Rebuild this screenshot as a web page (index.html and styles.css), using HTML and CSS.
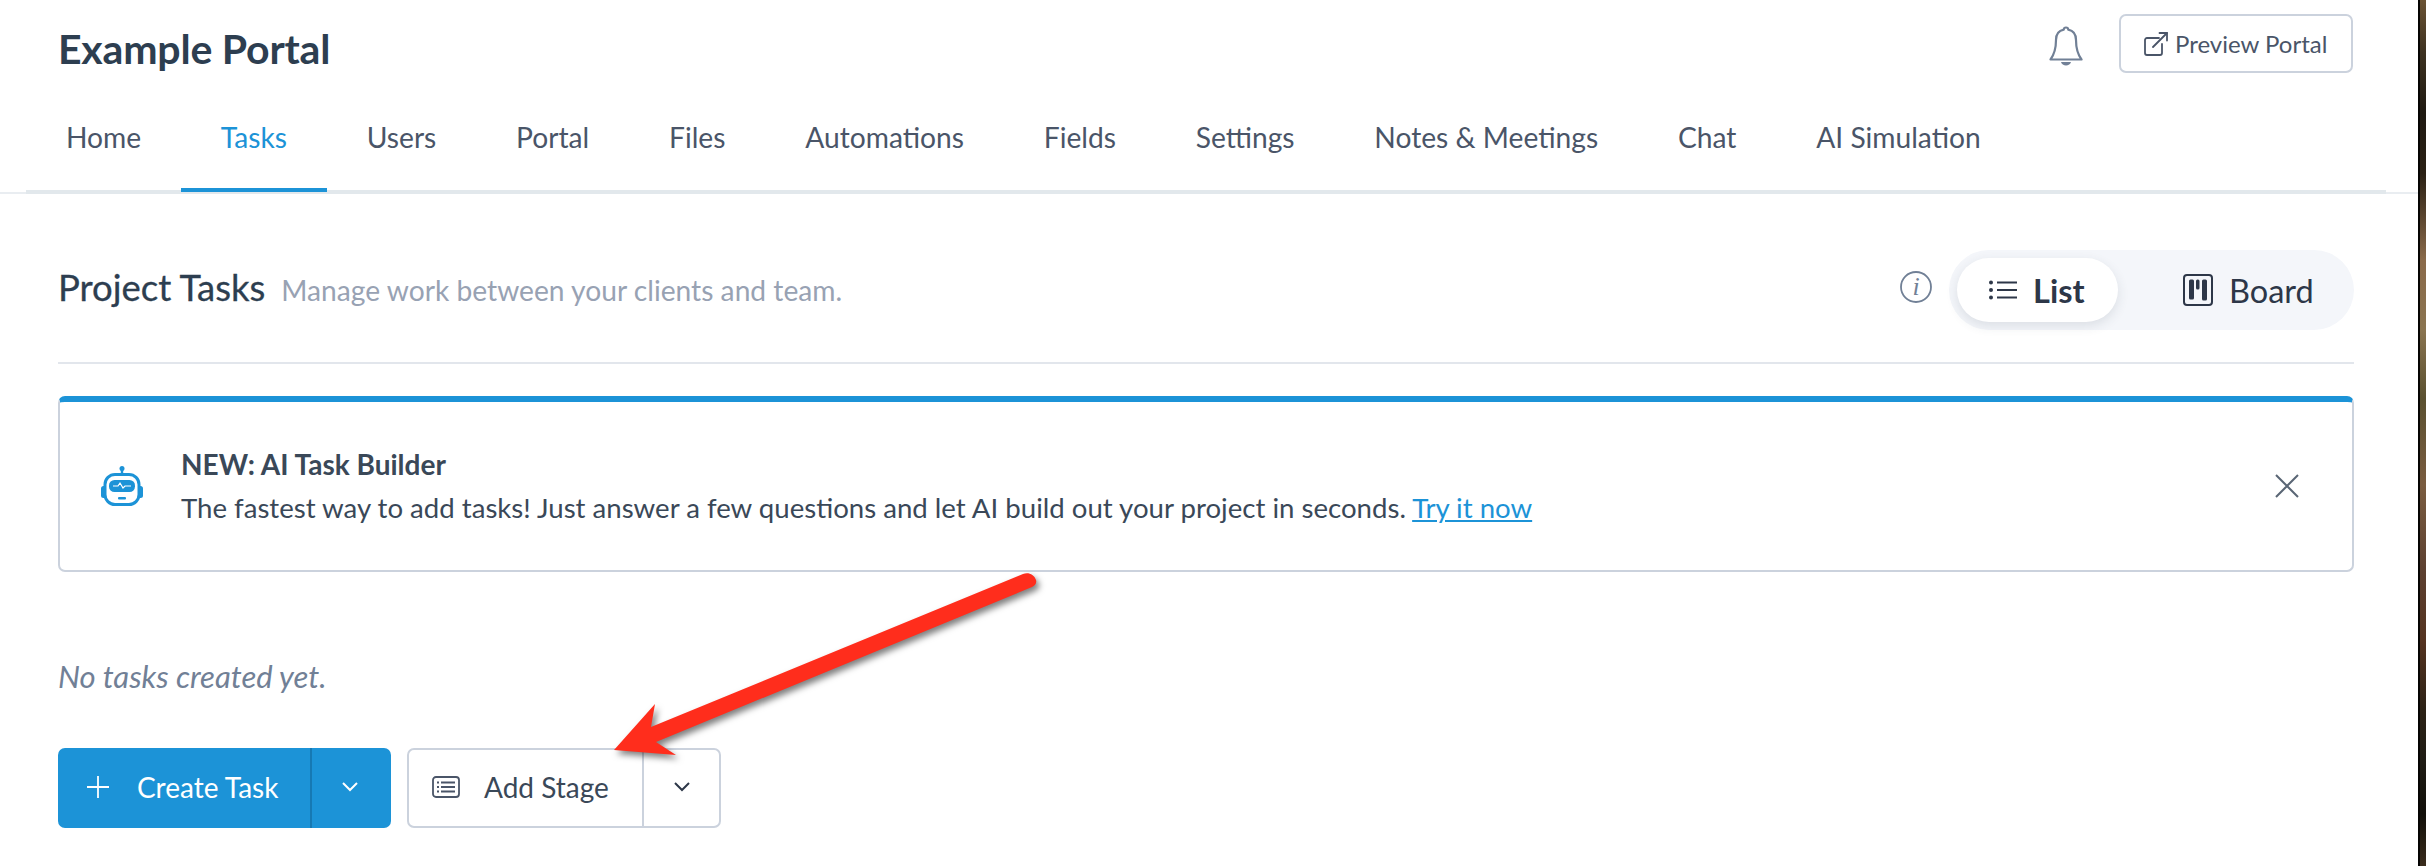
FILE: index.html
```html
<!DOCTYPE html>
<html lang="en">
<head>
<meta charset="utf-8">
<title>Example Portal</title>
<link rel="stylesheet" href="styles.css">
</head>
<body>
<div class="app">
  <main class="main">
    <header class="header">
      <div class="top-row">
        <h1 class="portal-title">Example Portal</h1>
        <div class="top-actions">
          <svg class="bell" viewBox="0 0 34 40" fill="none" stroke="#718096" stroke-width="2.2" stroke-linejoin="round"><path d="M17 1.500c1.300 0 2.200 1 2.300 2.200 5.200 1.100 7.700 5.300 7.700 10.300 0 8 1.500 14 5.500 19.500H1.500C5.500 28 7 22 7 14c0-5 2.500-9.200 7.700-10.300.1-1.200 1-2.200 2.300-2.200z"/><path d="M12 36h10c-.5 2.200-2.700 3.500-5 3.500s-4.500-1.300-5-3.500z" fill="#718096" stroke="none"/></svg>
          <button class="preview-btn">
            <svg class="ext-icon" viewBox="0 0 24 24" fill="none" stroke="#4a5568" stroke-width="1.800" stroke-linecap="round" stroke-linejoin="round"><path d="M15 6H3a2 2 0 0 0-2 2v13a2 2 0 0 0 2 2h13a2 2 0 0 0 2-2v-9"/><path d="M9 15 23 1"/><path d="M15.500 1H23v7.500"/></svg>
            <span>Preview Portal</span>
          </button>
        </div>
      </div>
      <nav class="tabs">
        <a class="tab">Home</a>
        <a class="tab tab-active">Tasks</a>
        <a class="tab">Users</a>
        <a class="tab">Portal</a>
        <a class="tab">Files</a>
        <a class="tab">Automations</a>
        <a class="tab">Fields</a>
        <a class="tab">Settings</a>
        <a class="tab">Notes &amp; Meetings</a>
        <a class="tab">Chat</a>
        <a class="tab">AI Simulation</a>
      </nav>
    </header>

    <section class="content">
      <div class="section-head">
        <div class="section-title">
          <h2>Project Tasks</h2>
          <span class="section-sub">Manage work between your clients and team.</span>
        </div>
        <div class="section-tools">
          <svg class="info-icon" viewBox="0 0 32 32" fill="none"><circle cx="16" cy="16" r="15" stroke="#718096" stroke-width="1.800"/><text x="16" y="24" text-anchor="middle" class="info-i">i</text></svg>
          <div class="view-toggle">
            <div class="view-opt view-on">
              <svg class="list-icon" viewBox="0 0 28 20" fill="#2d3748"><circle cx="2" cy="2.500" r="2"/><circle cx="2" cy="10" r="2"/><circle cx="2" cy="17.500" r="2"/><rect x="8" y="1.500" width="20" height="2"/><rect x="8" y="9" width="20" height="2"/><rect x="8" y="16.500" width="20" height="2"/></svg>
              <span>List</span>
            </div>
            <div class="view-opt">
              <svg class="board-icon" viewBox="0 0 30 32" fill="none"><rect x="1" y="1" width="28" height="30" rx="3" stroke="#2d3748" stroke-width="2"/><rect x="6" y="5.500" width="5" height="20" rx="1.500" fill="#2d3748"/><rect x="13" y="5.500" width="3.500" height="10" rx="1.500" fill="#2d3748"/><rect x="19" y="5.500" width="5" height="21" rx="1.500" fill="#2d3748"/></svg>
              <span>Board</span>
            </div>
          </div>
        </div>
      </div>

      <div class="notice">
        <svg class="robot" viewBox="0 0 42 40" fill="none">
          <circle cx="21" cy="2.500" r="2.500" fill="#1c93d7"/>
          <rect x="19.800" y="3" width="2.400" height="6" fill="#1c93d7"/>
          <rect x="0" y="20" width="6" height="12" rx="2.500" fill="#1c93d7"/>
          <rect x="36" y="20" width="6" height="12" rx="2.500" fill="#1c93d7"/>
          <rect x="4" y="8.500" width="34" height="30" rx="10" fill="#fff" stroke="#1c93d7" stroke-width="3"/>
          <rect x="8" y="14" width="26" height="12" rx="5.500" fill="#1c93d7"/>
          <path d="M12 20h5l2-3 3 5 2-2h6" stroke="#fff" stroke-width="1.200"/>
          <rect x="17" y="31" width="8" height="2.500" rx="1" fill="#1c93d7"/>
        </svg>
        <div class="notice-text">
          <strong>NEW: AI Task Builder</strong>
          <p>The fastest way to add tasks! Just answer a few questions and let AI build out your project in seconds. <a class="link">Try it now</a></p>
        </div>
        <svg class="close-icon" viewBox="0 0 24 24" fill="none" stroke="#5a6675" stroke-width="2"><path d="M1 1l22 22M23 1 1 23"/></svg>
      </div>

      <p class="empty">No tasks created yet.</p>

      <div class="actions">
        <div class="split split-primary">
          <button class="split-main">
            <svg class="plus" viewBox="0 0 22 22" stroke="#fff" stroke-width="1.800"><path d="M11 0v22M0 11h22"/></svg>
            <span>Create Task</span>
          </button>
          <button class="split-caret">
            <svg class="caret" viewBox="0 0 16 10" fill="none" stroke="#fff" stroke-width="2"><path d="M1 1l7 7 7-7"/></svg>
          </button>
        </div>
        <div class="split split-plain">
          <button class="split-main">
            <svg class="stage-icon" viewBox="0 0 28 22" fill="none" stroke="#4a5568" stroke-width="1.800"><rect x="1" y="1" width="26" height="20" rx="3"/><path d="M9 6.500h14M9 11h14M9 15.500h14M5 6.500h2M5 11h2M5 15.500h2"/></svg>
            <span>Add Stage</span>
          </button>
          <button class="split-caret">
            <svg class="caret" viewBox="0 0 16 10" fill="none" stroke="#2d3748" stroke-width="2"><path d="M1 1l7 7 7-7"/></svg>
          </button>
        </div>
      </div>
    </section>

    <svg class="arrow" viewBox="0 0 430 190" width="430" height="190">
      <path fill="#ff2d1c" d="M0 181 41 135 37 158 409 5C414 3 420 5 422 11 423 14 421 17 418 18L42 173 62 186z"/>
    </svg>
  </main>
  <aside class="photo-strip"></aside>
</div>
</body>
</html>
```
FILE: styles.css
```css
* { box-sizing: border-box; }
html, body { margin: 0; height: 866px; overflow: hidden; background: #fff; }
body { font-family: Lato, "Liberation Sans", sans-serif; color: #2d3748; }
.app { display: flex; width: 2426px; height: 866px; }
.main { position: relative; width: 2418px; flex: none; background: #fff; }
.photo-strip { width: 8px; flex: none; border-left: 2px solid #050403;
  background: linear-gradient(to bottom, #6a5233 0, #3e3221 6%, #1f1a12 13%, #2a2014 20%, #8a6a4a 30%, #8a7450 38%, #5a5030 46%, #7a5c40 56%, #5c4030 66%, #553320 74%, #2c2216 82%, #1f1c14 88%, #12100a 94%, #3a2c1c 100%); }

.header { border-bottom: 2px solid #e9edf1; }
.top-row { display: flex; justify-content: space-between; align-items: center; padding: 14px 65px 0 58px; height: 73px; }
.portal-title { margin: 10px 0 0; font-size: 41px; line-height: 50px; font-weight: 700; color: #2d3e50; letter-spacing: -0.2px; }
.top-actions { display: flex; align-items: center; gap: 36px; }
.bell { width: 34px; height: 40px; margin-top: 4px; }
.preview-btn { display: flex; align-items: center; gap: 7px; width: 234px; height: 59px; padding: 0 0 0 23px; background: #fff; border: 2px solid #cbd2dd; border-radius: 7px; font: 400 24px Lato, sans-serif; color: #4a5568; }
.ext-icon { width: 24px; height: 24px; }

.tabs { display: flex; width: 2360px; margin-left: 26px; height: 121px; border-bottom: 4px solid #e2e8ec; margin-bottom: -2px; }
.tab { display: block; padding: 44px 39.900px 0; font-size: 28.2px; line-height: 40px; color: #4a5568; height: 119px; }
.tab-active { color: #1c93d7; border-bottom: 4px solid #1c93d7; }

.content { padding: 0 64px 0 58px; }
.section-head { display: flex; justify-content: space-between; align-items: center; height: 170px; padding: 56px 0 32px; border-bottom: 2px solid #e2e6ec; }
.section-title { display: flex; align-items: baseline; gap: 16px; margin-top: -6px; }
.section-title h2 { margin: 0; font-size: 36.5px; font-weight: 400; color: #2d3e50; -webkit-text-stroke: .3px #2d3e50; }
.section-sub { font-size: 28.2px; color: #98a2b3; }
.section-tools { display: flex; align-items: center; gap: 17px; }
.info-icon { width: 32px; height: 32px; margin-top: -6px; }
.info-i { font: italic 400 26px "Liberation Serif", serif; fill: #718096; }
.view-toggle { display: flex; align-items: center; width: 405px; height: 80px; padding: 0 8px; border-radius: 40px; background: #f4f6fa; }
.view-opt { display: flex; align-items: center; gap: 16px; font-size: 32.5px; color: #2d3748; flex: 1; height: 64px; padding-left: 65px; }
.view-on { flex: none; width: 161px; padding-left: 32px; font-weight: 700; background: #fff; border-radius: 32px; box-shadow: 0 4px 12px rgba(45, 55, 72, .12); }
.list-icon { width: 28px; height: 20px; }
.board-icon { width: 30px; height: 32px; }

.notice { display: flex; align-items: center; height: 176px; margin-top: 32px; padding: 0 53px 0 41px; border: 2px solid #cbd2dd; border-top: 6px solid #1c93d7; border-radius: 7px; }
.robot { width: 42px; height: 40px; flex: none; }
.notice-text { flex: 1; margin-left: 38px; font-size: 27.6px; color: #3a4858; line-height: 44px; margin-top: -1px; }
.notice-text strong { display: block; font-weight: 700; font-size: 28px; }
.notice-text p { margin: 0; }
.link { color: #1c93d7; text-decoration: underline; }
.close-icon { width: 24px; height: 24px; }

.empty { margin: 85px 0 0; font-size: 31px; line-height: 38px; font-style: italic; color: #718096; }
.actions { display: flex; gap: 16px; margin-top: 53px; }
.split { display: flex; height: 80px; border-radius: 7px; }
.split button { background: none; border: 0; padding: 0 0 2px; display: flex; align-items: center; justify-content: center; font: 400 28px Lato, sans-serif; }
.split-primary { width: 333px; background: #1c93d7; color: #fff; }
.split-primary .split-main { width: 254px; gap: 28px; color: #fff; border-right: 2px solid #1679b3; justify-content: flex-start; padding-left: 29px; }
.split-primary .split-caret { flex: 1; padding-right: 3px; }
.split-plain { width: 314px; border: 2px solid #cbd2dd; }
.split-plain .split-main { width: 235px; gap: 24px; color: #3a4858; border-right: 2px solid #cbd2dd; justify-content: flex-start; padding-left: 23px; }
.split-plain .split-caret { flex: 1; }
.plus { width: 22px; height: 22px; }
.caret { width: 16px; height: 10px; }
.stage-icon { width: 28px; height: 22px; }

.arrow { position: absolute; left: 614px; top: 569px; overflow: visible; filter: drop-shadow(3px 4px 3px rgba(0, 0, 0, .5)); }
```
